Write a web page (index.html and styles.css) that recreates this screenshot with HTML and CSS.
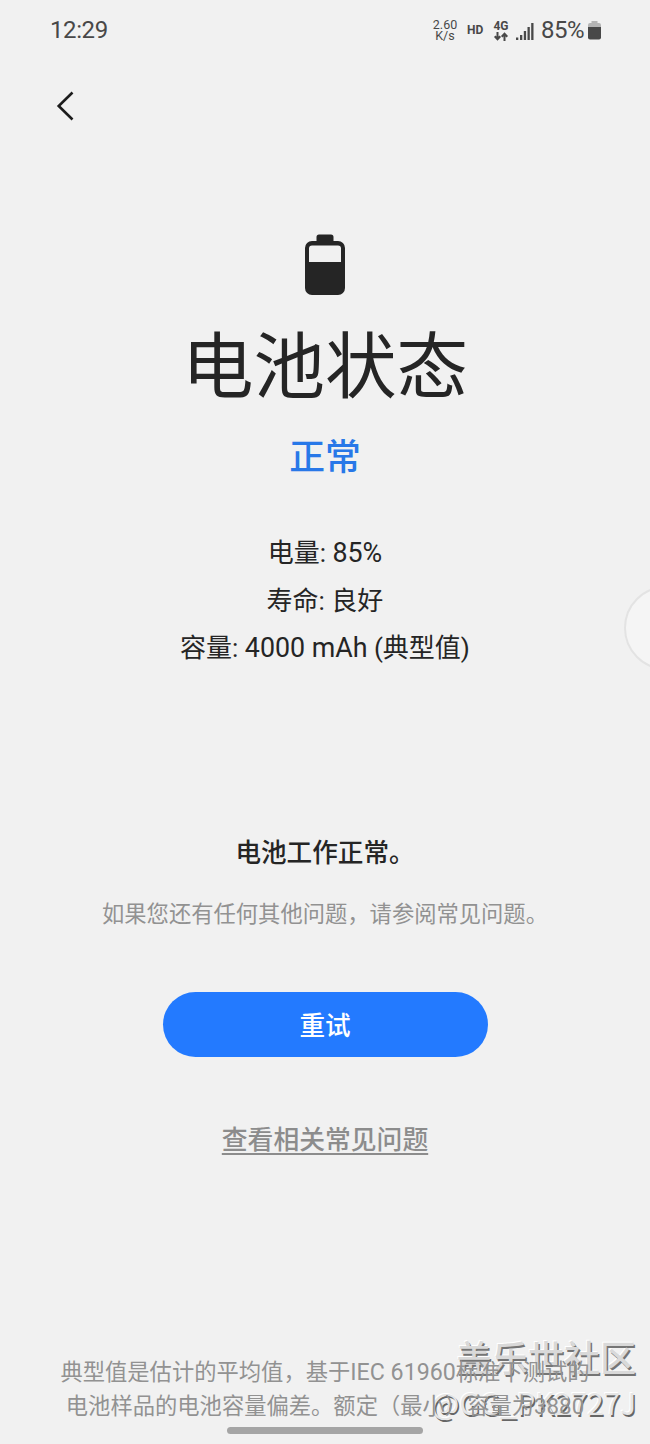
FILE: index.html
```
<!DOCTYPE html>
<html lang="zh-CN">
<head>
  <meta charset="utf-8">
  <title>电池状态</title>
  <link rel="stylesheet" href="styles.css">
</head>
<body>
  <div class="page">
    <div class="status-bar">
      <span class="time">12:29</span>
      <div class="status-icons">
        <div class="speed"><span>2.60</span><span>K/s</span></div>
        <span class="hd">HD</span>
        <div class="network">
          <span>4G</span>
          <svg width="14" height="9" viewBox="0 0 14 9" fill="none" stroke="#484848" stroke-width="2">
            <path d="M3.5 0v7M.7 4.3l2.8 3 2.8-3M10.5 9V2M7.7 4.7l2.8-3 2.8 3"/>
          </svg>
        </div>
        <svg class="signal" width="18" height="18" viewBox="0 0 18 18" fill="#484848">
          <rect x="0" y="14.500" width="2.300" height="2.500"/>
          <rect x="4" y="12" width="2.300" height="5"/>
          <rect x="7.800" y="8" width="2.300" height="9"/>
          <rect x="11.500" y="4" width="2.300" height="13"/>
          <rect x="15.200" y="0" width="2.300" height="17"/>
        </svg>
        <span class="percent">85%</span>
        <svg class="battery-small" width="13" height="19" viewBox="0 0 13 19">
          <path fill="#b5b5b5" d="M3.5 0h6v2H11a2 2 0 0 1 2 2v3H0V4a2 2 0 0 1 2-2h1.500z"/>
          <path fill="#484848" d="M0 6h13v10.500a2 2 0 0 1-2 2H2a2 2 0 0 1-2-2z"/>
        </svg>
      </div>
    </div>

    <div class="header">
      <svg width="20" height="30" viewBox="0 0 20 30" fill="none" stroke="#1c1c1c" stroke-width="2.600">
        <path d="M16.500 1.500 2.700 15 16.500 28.500"/>
      </svg>
    </div>

    <div class="hero">
      <svg class="battery" width="42" height="62" viewBox="0 0 42 62">
        <path fill="#252525" fill-rule="evenodd" d="M15 .5h12a2.500 2.500 0 0 1 2.500 2.500v4H34a7 7 0 0 1 7 7v40a7 7 0 0 1-7 7H8a7 7 0 0 1-7-7V14a7 7 0 0 1 7-7h4.500V3A2.500 2.500 0 0 1 15 .5zM8 11.500a3 3 0 0 0-3 3V28h32V14.500a3 3 0 0 0-3-3z"/>
      </svg>
      <h1>电池状态</h1>
      <div class="result">正常</div>
    </div>

    <div class="info">
      <div>电量: <span class="value">85%</span></div>
      <div>寿命: 良好</div>
      <div>容量: <span class="value">4000 mAh</span> (典型值)</div>
    </div>

    <h2>电池工作正常。</h2>
    <p class="tip">如果您还有任何其他问题，请参阅常见问题。</p>
    <button class="retry">重试</button>
    <a class="faq" href="#">查看相关常见问题</a>

    <p class="note">典型值是估计的平均值，基于<span class="standard">IEC 61960</span>标准下测试的<br>电池样品的电池容量偏差。额定（最小）容量为3880</p>

    <div class="edge-handle"></div>
    <div class="home-bar"></div>
    <div class="watermark">
      <div class="community">盖乐世社区</div>
      <div class="user">@GG_PK2727J</div>
    </div>
  </div>
</body>
</html>
```

FILE: styles.css
```
* {
  box-sizing: border-box;
}

body {
  margin: 0;
  background-color: #f1f1f1;
  font-family: Roboto, "Noto Sans CJK SC", sans-serif;
  color: #252525;
}

.page {
  position: relative;
  width: 650px;
  height: 1444px;
  overflow: hidden;
  display: flex;
  flex-direction: column;
  align-items: center;
}

.status-bar {
  width: 100%;
  height: 60px;
  padding: 0 49px 0 50px;
  display: flex;
  justify-content: space-between;
  align-items: center;
  color: #484848;
}

.time {
  font-size: 24px;
  letter-spacing: -0.4px;
}

.status-icons {
  display: flex;
  align-items: center;
}

.speed {
  display: flex;
  flex-direction: column;
  align-items: center;
  width: 24px;
  font-size: 12.5px;
  line-height: 11px;
}

.hd {
  margin-left: 10px;
  width: 16px;
  font-size: 12px;
  font-weight: 700;
}

.network {
  display: flex;
  flex-direction: column;
  align-items: center;
  margin-left: 10px;
  width: 16px;
  font-size: 12px;
  font-weight: 700;
  line-height: 12px;
}

.signal {
  margin: 3px 0 0 7px;
}

.percent {
  margin-left: 7px;
  width: 44px;
  font-size: 24px;
  letter-spacing: -0.5px;
}

.battery-small {
  margin-left: 3px;
}

.header {
  width: 100%;
  height: 92px;
  padding: 31px 0 0 56px;
}

.hero {
  margin-top: 82px;
  text-align: center;
}

.battery {
  display: block;
  margin: 0 auto;
}

h1 {
  margin: 20px 0 0;
  font-size: 71.5px;
  font-weight: 400;
  line-height: 104px;
}

.result {
  margin-top: 13px;
  font-size: 35.8px;
  font-weight: 500;
  line-height: 50px;
  color: #2878e8;
}

.info {
  margin-top: 47px;
  font-size: 26px;
  line-height: 47.5px;
  text-align: center;
}

.value {
  font-size: 26.8px;
}

h2 {
  margin: 160px 0 0;
  font-size: 25.6px;
  font-weight: 500;
  line-height: 40px;
}

.tip {
  margin: 24px 0 0;
  font-size: 22.3px;
  line-height: 34px;
  color: #929292;
}

.retry {
  flex: none;
  margin-top: 61px;
  width: 325px;
  height: 65px;
  padding: 0 0 2px;
  border: none;
  border-radius: 33px;
  background-color: #237aff;
  color: #fff;
  font-family: inherit;
  font-size: 25.6px;
  font-weight: 500;
}

.faq {
  margin-top: 63px;
  font-size: 25.8px;
  font-weight: 500;
  line-height: 40px;
  color: #8c8c8c;
  text-underline-offset: 4px;
  text-decoration-thickness: 1.5px;
}

/* stays readable above the watermark */
.note {
  z-index: 1;
  margin: 195px 0 0;
  font-size: 22.3px;
  line-height: 34px;
  text-align: center;
  white-space: nowrap;
  color: #929292;
}

.standard {
  font-size: 23.2px;
}

.edge-handle {
  position: absolute;
  left: 624px;
  top: 586px;
  width: 84px;
  height: 84px;
  border: 2px solid #e3e3e3;
  border-radius: 50%;
  background-color: #f5f5f5;
}

.home-bar {
  position: absolute;
  left: 227px;
  bottom: 10px;
  width: 196px;
  height: 7px;
  border-radius: 4px;
  background-color: #a5a5a5;
}

.watermark {
  position: absolute;
  right: 14px;
  bottom: 17px;
  text-align: right;
  white-space: nowrap;
}

.community {
  font-family: "Noto Sans CJK SC", sans-serif;
  font-size: 36px;
  font-weight: 500;
  line-height: 45px;
  color: #d9d9d9;
  text-shadow: 1.5px 2px 0 #757575, -1px -1px 0 #fff;
}

.user {
  font-family: "Noto Sans CJK SC", sans-serif;
  font-size: 29.6px;
  line-height: 48px;
  color: #e6e6e6;
  text-shadow: 1.5px 1.5px 0 #666, -1px -1px 0 #fff;
}
```
